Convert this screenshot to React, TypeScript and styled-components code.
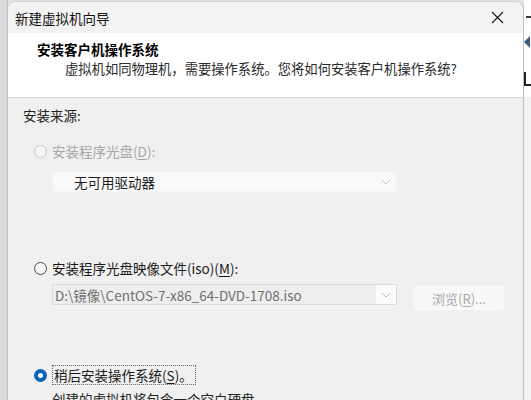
import React from "react";
import styled, { createGlobalStyle } from "styled-components";

const Global = createGlobalStyle`
  html, body { margin: 0; padding: 0; }
  body {
    width: 531px; height: 400px; overflow: hidden;
    background: #e4e4e4;
    font-family: "Noto Sans CJK SC", "Noto Sans", sans-serif;
    font-size: 13.5px;
    color: #1a1a1a;
  }
`;

const Page = styled.div`
  display: flex;
  width: 531px;
  height: 400px;
  overflow: hidden;
`;

const Gutter = styled.div`
  width: 7px;
  background: #dadada;
  border-right: 1px solid #c4c4c4;
  flex: none;
`;

const Window = styled.div`
  width: 515px;
  flex: none;
  margin-top: 1px;
  display: flex;
  flex-direction: column;
  background: #f0f0f0;
  border-right: 1px solid #bdbdbd;
  border-top: 1px solid #d0d0d0;
  border-top-left-radius: 8px;
  border-top-right-radius: 8px;
  overflow: hidden;
`;

const TitleBar = styled.div`
  flex: none;
  height: 31px;
  display: flex;
  align-items: center;
  justify-content: space-between;
  padding: 0 19px 0 7px;
  background: #f3f3f3;
  font-size: 13.5px;
  color: #111;
`;

const Header = styled.div`
  flex: none;
  height: 65px;
  background: #ffffff;
  border-bottom: 1px solid #d3d3d3;
  padding: 7px 0 0 29px;
  box-sizing: border-box;
`;

const HeaderTitle = styled.div`
  font-weight: 700;
  font-size: 13.5px;
  line-height: 18px;
  color: #000;
`;

const HeaderSub = styled.div`
  margin: 2px 0 0 28px;
  font-size: 13.3px;
  line-height: 18px;
  color: #2a2a2a;
`;

const Body = styled.div`
  flex: none;
  padding: 8px 0 0 15px;
  display: flex;
  flex-direction: column;
`;

const SectionLabel = styled.div`
  line-height: 18px;
  color: #222;
`;

const RadioRow = styled.div<{ $mt: number; $disabled?: boolean }>`
  display: flex;
  align-items: center;
  margin: ${(p) => p.$mt}px 0 0 11px;
  height: 20px;
  color: ${(p) => (p.$disabled ? "#a6a6a6" : "#1a1a1a")};
`;

const RadioCircle = styled.span<{ $checked?: boolean; $disabled?: boolean }>`
  width: 13px;
  height: 13px;
  border-radius: 50%;
  box-sizing: border-box;
  flex: none;
  margin-right: 5px;
  border: ${(p) =>
    p.$checked ? "4px solid #0a63b8" : `1px solid ${p.$disabled ? "#c6c6c6" : "#4a4a4a"}`};
  background: ${(p) => (p.$checked ? "#ffffff" : p.$disabled ? "#f6f6f6" : "#f7f7f7")};
`;

const FocusLabel = styled.span`
  border: 1px dotted #6a6a6a;
  padding: 0 2px 0 1px;
  line-height: 18px;
`;

const U = styled.span`
  text-decoration: underline;
  text-underline-offset: 2px;
`;

const FieldRow = styled.div<{ $mt: number }>`
  display: flex;
  align-items: flex-start;
  margin: ${(p) => p.$mt}px 0 0 29px;
  gap: 16px;
`;

const Combo = styled.div<{ $variant: "empty" | "file" }>`
  width: 345px;
  height: 21px;
  box-sizing: border-box;
  display: flex;
  align-items: center;
  border: 1px solid ${(p) => (p.$variant === "file" ? "#dcdcdc" : "#f4f4f4")};
  background: ${(p) => (p.$variant === "file" ? "#eeeeee" : "#f9f9f9")};
  font-size: 13.5px;
`;

const ComboText = styled.div<{ $indent: number; $color: string }>`
  flex: 1;
  padding-left: ${(p) => p.$indent}px;
  color: ${(p) => p.$color};
  white-space: nowrap;
  overflow: hidden;
`;

const ComboArrow = styled.div<{ $light?: boolean }>`
  width: 20px;
  height: 100%;
  display: flex;
  align-items: center;
  justify-content: center;
  background: ${(p) => (p.$light ? "#f9f9f9" : "#fbfbfb")};
`;

const BrowseButton = styled.div`
  width: 92px;
  height: 26px;
  margin-top: 1px;
  display: flex;
  align-items: center;
  justify-content: center;
  background: #f8f8f8;
  border: 1px solid #f2f2f2;
  border-radius: 3px;
  box-sizing: border-box;
  color: #a8a8a8;
  font-size: 13px;
`;

const Desc = styled.div`
  margin: 5px 0 0 29px;
  line-height: 18px;
  color: #222;
  white-space: nowrap;
`;

const RightStrip = styled.div`
  flex: 1;
  display: flex;
  flex-direction: column;
  background: #f2f2f2;
`;

const StripTop = styled.div`
  height: 97px;
  background: #ffffff;
  display: flex;
  flex-direction: column;
  align-items: flex-end;
`;

const Dash = styled.div`
  width: 5px;
  height: 2px;
  background: #3a3a3a;
  margin-top: 16px;
`;

const Tri = styled.div`
  width: 0;
  height: 0;
  margin-top: 18px;
  align-self: flex-start;
  border-top: 6px solid transparent;
  border-bottom: 6px solid transparent;
  border-right: 6px solid #3d5a80;
`;

const CutChar = styled.div`
  margin-top: 24px;
  align-self: flex-start;
  width: 7px;
  height: 14px;
  border-bottom: 2px solid #222;
  border-left: 2px solid #222;
  box-sizing: border-box;
`;

const Chevron = ({ color }: { color: string }) => (
  <svg width="10" height="6" viewBox="0 0 10 6">
    <path d="M1 1 L5 5 L9 1" fill="none" stroke={color} strokeWidth="1" />
  </svg>
);

const CloseIcon = () => (
  <svg width="13" height="13" viewBox="0 0 13 13">
    <path d="M1 1 L12 12 M12 1 L1 12" stroke="#1a1a1a" strokeWidth="1.1" />
  </svg>
);

export default function App() {
  return (
    <>
      <Global />
      <Page>
        <Gutter />
        <Window>
          <TitleBar>
            <span>新建虚拟机向导</span>
            <CloseIcon />
          </TitleBar>
          <Header>
            <HeaderTitle>安装客户机操作系统</HeaderTitle>
            <HeaderSub>虚拟机如同物理机，需要操作系统。您将如何安装客户机操作系统?</HeaderSub>
          </Header>
          <Body>
            <SectionLabel>安装来源:</SectionLabel>
            <RadioRow $mt={17} $disabled>
              <RadioCircle $disabled />
              <span>
                安装程序光盘(<U>D</U>):
              </span>
            </RadioRow>
            <FieldRow $mt={10}>
              <Combo $variant="empty">
                <ComboText $indent={21} $color="#1f1f1f">无可用驱动器</ComboText>
                <ComboArrow $light>
                  <Chevron color="#c8c8c8" />
                </ComboArrow>
              </Combo>
            </FieldRow>
            <RadioRow $mt={66}>
              <RadioCircle />
              <span>
                安装程序光盘映像文件(iso)(<U>M</U>):
              </span>
            </RadioRow>
            <FieldRow $mt={6}>
              <Combo $variant="file">
                <ComboText $indent={2} $color="#6e6e6e">D:\镜像\CentOS-7-x86_64-DVD-1708.iso</ComboText>
                <ComboArrow>
                  <Chevron color="#b8b8b8" />
                </ComboArrow>
              </Combo>
              <BrowseButton>
                浏览(<U>R</U>)...
              </BrowseButton>
            </FieldRow>
            <RadioRow $mt={54}>
              <RadioCircle $checked />
              <FocusLabel>
                稍后安装操作系统(<U>S</U>)。
              </FocusLabel>
            </RadioRow>
            <Desc>创建的虚拟机将包含一个空白硬盘。</Desc>
          </Body>
        </Window>
        <RightStrip>
          <StripTop>
            <Dash />
            <Tri />
            <CutChar />
          </StripTop>
        </RightStrip>
      </Page>
    </>
  );
}
